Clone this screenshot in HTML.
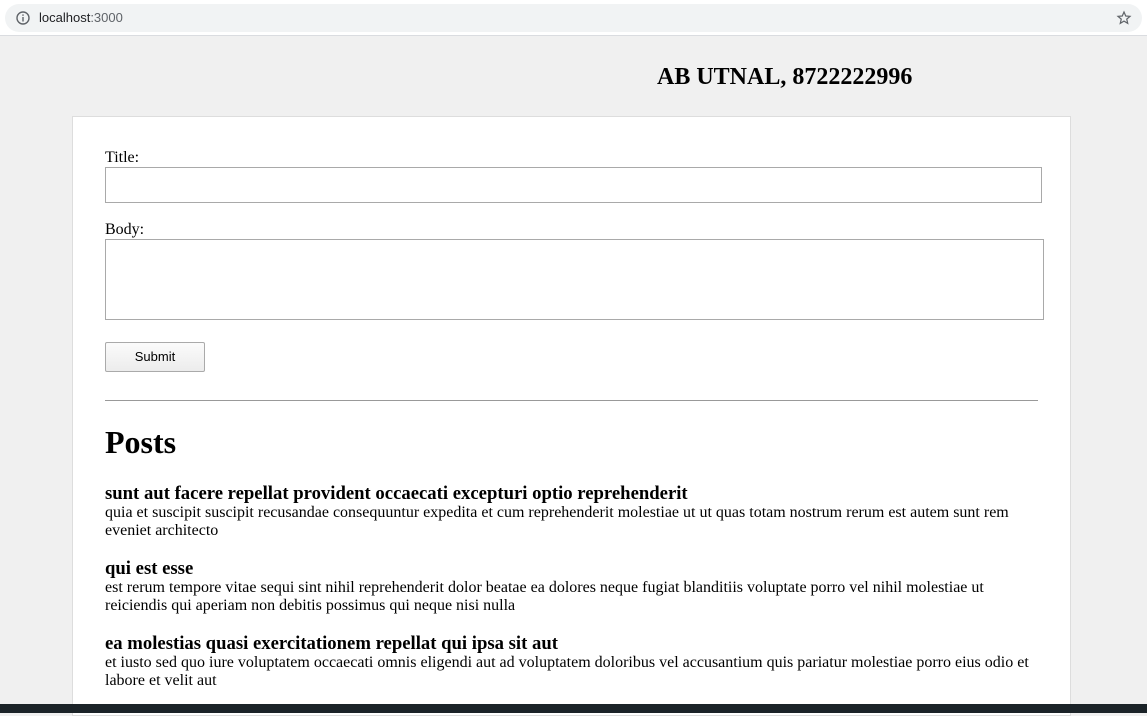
<!DOCTYPE html>
<html><head><meta charset="utf-8"><style>
*{box-sizing:border-box}
body{margin:0;width:1147px;height:713px;overflow:hidden;background:#f0f0f0;font-family:"Liberation Serif",serif;position:relative}
.bar{position:absolute;left:0;top:0;width:1147px;height:36px;background:#fff;border-bottom:1px solid #dadce0}
.url{position:absolute;left:5px;top:4px;width:1137px;height:28px;background:#f1f3f4;border-radius:14px}
.url span{position:absolute;left:34px;top:6px;font:13px "Liberation Sans",sans-serif;color:#202124}
.url span i{font-style:normal;color:#5f6368}
.hdr{position:absolute;left:657px;top:64px;font-size:24px;font-weight:bold}
.card{position:absolute;left:72px;top:116px;width:999px;height:600px;background:#fff;border:1px solid #ddd}
label{position:absolute;left:32px;font-size:16px}
.in{position:absolute;left:32px;border:1px solid #a9a9a9;background:#fff}
.btn{position:absolute;left:32px;top:225px;width:100px;height:30px;border:1px solid #aaa;background:linear-gradient(#fbfbfb,#ececec);font:13px "Liberation Sans",sans-serif;text-align:center;line-height:28px;border-radius:2px}
hr{position:absolute;left:32px;top:283px;width:933px;margin:0;border:0;border-top:1px solid #999}
h1{position:absolute;left:32px;top:307px;margin:0;font-size:32px}
.p{position:absolute;left:32px;width:960px;font-size:16px;line-height:18px;white-space:nowrap}
.p b{font-size:18.7px;display:block;line-height:20px}
.task{position:absolute;left:0;top:704px;width:1147px;height:9px;background:#1b2328}
</style></head><body>
<div class="bar"><div class="url">
<svg style="position:absolute;left:11px;top:7px" width="14" height="14" viewBox="0 0 14 14"><circle cx="7" cy="7" r="6" fill="none" stroke="#5f6368" stroke-width="1.4"/><rect x="6.3" y="6" width="1.4" height="4.5" fill="#5f6368"/><rect x="6.3" y="3.4" width="1.4" height="1.4" fill="#5f6368"/></svg>
<span>localhost<i>:3000</i></span>
<svg style="position:absolute;right:10px;top:6px" width="16" height="16" viewBox="0 0 24 24"><path d="M12 3l2.6 6 6.4.5-4.9 4.2 1.5 6.3L12 16.7 6.4 20l1.5-6.3L3 9.5l6.4-.5z" fill="none" stroke="#5f6368" stroke-width="1.8"/></svg>
</div></div>
<div class="hdr">AB UTNAL, 8722222996</div>
<div class="card">
<label style="top:32px">Title:</label>
<div class="in" style="top:50px;width:937px;height:36px"></div>
<label style="top:104px">Body:</label>
<div class="in" style="top:122px;width:939px;height:81px"></div>
<div class="btn">Submit</div>
<hr>
<h1>Posts</h1>
<div class="p" style="top:367px"><b>sunt aut facere repellat provident occaecati excepturi optio reprehenderit</b>quia et suscipit suscipit recusandae consequuntur expedita et cum reprehenderit molestiae ut ut quas totam nostrum rerum est autem sunt rem<br>eveniet architecto</div>
<div class="p" style="top:442px"><b>qui est esse</b>est rerum tempore vitae sequi sint nihil reprehenderit dolor beatae ea dolores neque fugiat blanditiis voluptate porro vel nihil molestiae ut<br>reiciendis qui aperiam non debitis possimus qui neque nisi nulla</div>
<div class="p" style="top:517px"><b>ea molestias quasi exercitationem repellat qui ipsa sit aut</b>et iusto sed quo iure voluptatem occaecati omnis eligendi aut ad voluptatem doloribus vel accusantium quis pariatur molestiae porro eius odio et<br>labore et velit aut</div>
</div>
<div class="task"></div>
</body></html>
